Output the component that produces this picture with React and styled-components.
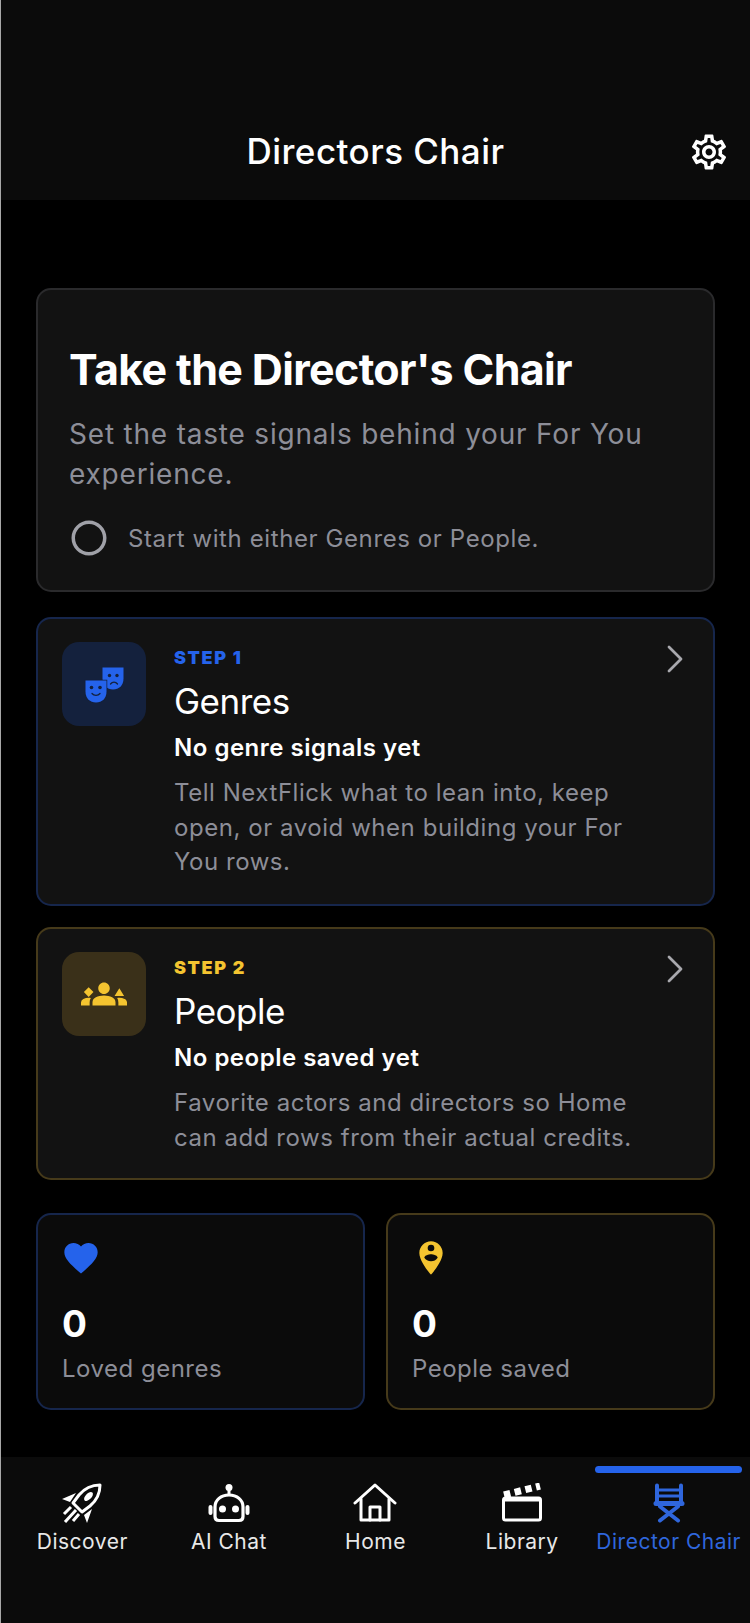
import styled, { createGlobalStyle } from "styled-components";
import { ChevronRight } from "lucide-react";
import {
  MdOutlineSettings,
  MdRadioButtonUnchecked,
  MdGroups3,
  MdFavorite,
  MdPersonPinCircle,
} from "react-icons/md";

const GlobalStyle = createGlobalStyle`
  html, body { margin: 0; padding: 0; background: #000; }
  * { box-sizing: border-box; }
  body { font-family: Inter, "Liberation Sans", sans-serif; color: #fff; }
`;

const Page = styled.div`
  width: 750px;
  height: 1623px;
  background: #000;
  border-left: 1px solid #a8a8a8;
  display: flex;
  flex-direction: column;
  overflow: hidden;
`;

const Header = styled.header`
  height: 200px;
  background: #0b0b0b;
  display: flex;
  align-items: flex-end;
  justify-content: center;
  padding-bottom: 26px;
  position: relative;
`;

const Title = styled.h1`
  margin: 0;
  font-size: 35px;
  line-height: 46px;
  font-weight: 500;
  letter-spacing: 0.45px;
`;

const SettingsBtn = styled.div`
  position: absolute;
  right: 20px;
  top: 131px;
  display: flex;
  font-size: 42px;
`;

const Main = styled.main`
  flex: 1;
  padding: 88px 35px 0 35px;
  display: flex;
  flex-direction: column;
  gap: 21px;
`;

const Card = styled.section`
  background: #121212;
  border: 2px solid ${(p) => p.$border};
  border-radius: 15px;
`;

const HeroCard = styled(Card)`
  height: 304px;
  padding: 52px 32px 0 31px;
  margin-bottom: 4px;
`;

const HeroTitle = styled.h2`
  margin: 0;
  font-size: 43px;
  line-height: 54px;
  font-weight: 700;
  letter-spacing: -0.65px;
`;

const HeroText = styled.p`
  margin: 18px 0 0;
  font-size: 28px;
  line-height: 40px;
  letter-spacing: 0.8px;
  color: #8d8e98;
`;

const HintRow = styled.div`
  display: flex;
  align-items: center;
  gap: 18px;
  margin-top: 23px;
  font-size: 24px;
  letter-spacing: 0.6px;
  color: #8d8e98;
  svg {
    font-size: 42px;
    color: #a0a1a8;
    margin-left: -1px;
  }
`;

const StepCard = styled(Card)`
  display: flex;
  gap: 28px;
  padding: 23px 24px 0 24px;
  height: ${(p) => p.$height}px;
`;

const IconBox = styled.div`
  width: 84px;
  height: 84px;
  flex: none;
  border-radius: 17px;
  background: ${(p) => p.$bg};
  color: ${(p) => p.$color};
  display: flex;
  align-items: center;
  justify-content: center;
`;

const StepBody = styled.div`
  flex: 1;
  min-width: 0;
`;

const StepHead = styled.div`
  display: flex;
  justify-content: space-between;
  align-items: center;
  height: 30px;
  svg {
    color: #a8a8ad;
    margin: 3px -10px 0 0;
  }
`;

const StepLabel = styled.span`
  font-size: 18px;
  font-weight: 900;
  letter-spacing: 1.6px;
  color: ${(p) => p.$color};
`;

const StepName = styled.h3`
  margin: 7px 0 0;
  font-size: 35px;
  line-height: 44px;
  font-weight: 400;
  letter-spacing: -0.5px;
`;

const StepStatus = styled.div`
  margin-top: 9px;
  font-size: 24px;
  line-height: 32px;
  font-weight: 600;
  letter-spacing: 0.5px;
`;

const StepText = styled.p`
  margin: 12px 0 0;
  max-width: 470px;
  font-size: 24px;
  line-height: 34.5px;
  letter-spacing: 0.55px;
  color: #8d8e98;
`;

const StatsRow = styled.div`
  display: grid;
  grid-template-columns: 1fr 1fr;
  gap: 21px;
  margin-top: 12px;
`;

const StatCard = styled.div`
  height: 197px;
  background: #0b0b0b;
  border: 2px solid ${(p) => p.$border};
  border-radius: 15px;
  padding: 23px 24px 0;
  svg {
    display: block;
    font-size: 40px;
    color: ${(p) => p.$color};
    margin-left: ${(p) => p.$iconShift}px;
  }
`;

const StatValue = styled.div`
  margin-top: 23px;
  font-size: 37px;
  line-height: 46px;
  font-weight: 700;
`;

const StatLabel = styled.div`
  margin-top: 6px;
  font-size: 24px;
  line-height: 32px;
  letter-spacing: 0.5px;
  color: #8d8e98;
`;

const Nav = styled.nav`
  height: 166px;
  background: #0b0b0b;
  padding: 0 8px;
  display: grid;
  grid-template-columns: repeat(5, 1fr);
`;

const NavItem = styled.div`
  position: relative;
  display: flex;
  flex-direction: column;
  align-items: center;
  padding-top: 26px;
  color: ${(p) => (p.$active ? "#2f66dc" : "#fff")};
  svg {
    display: block;
    height: 40px;
  }
`;

const NavBar = styled.div`
  position: absolute;
  top: 9px;
  left: 0;
  right: 0;
  height: 7px;
  border-radius: 4px;
  background: #2563eb;
`;

const NavLabel = styled.span`
  margin-top: 5px;
  font-size: 21px;
  line-height: 28px;
  letter-spacing: 0.5px;
  white-space: nowrap;
  color: ${(p) => (p.$active ? "#2f66dc" : "#e8e8e8")};
`;

function MasksIcon() {
  return (
    <svg width="40" height="40" viewBox="0 0 40 40">
      <path
        fill="currentColor"
        d="M18.500 3.500h21v11c0 7-4.500 11-10.500 11s-10.500-4-10.500-11z"
      />
      <path
        fill="currentColor"
        stroke="#14213d"
        strokeWidth="1.500"
        paintOrder="stroke"
        d="M1.500 16.500h21v11c0 7-4.500 11-10.500 11S1.500 34.500 1.500 27.500z"
      />
      <g fill="#14213d">
        <circle cx="25.500" cy="11.500" r="1.700" />
        <circle cx="33" cy="11.500" r="1.700" />
        <circle cx="7.500" cy="23.500" r="1.800" />
        <circle cx="16" cy="23.500" r="1.800" />
      </g>
      <g fill="none" stroke="#14213d" strokeWidth="1.300" strokeLinecap="round">
        <path d="M26.500 20c2-2.500 5-2.500 7 0" />
        <path d="M8 29.500c2 2.500 6 2.500 8 0" />
      </g>
    </svg>
  );
}

function RocketIcon() {
  return (
    <svg viewBox="0 0 40 40" fill="none" stroke="currentColor">
      <path strokeWidth="3" strokeLinejoin="round" d="M38 2C30 2 22 6 17 12l-6 8 9 9 8-6c6-5 10-13 10-21z" />
      <ellipse cx="26.500" cy="13.500" rx="3" ry="5.500" transform="rotate(45 26.500 13.500)" fill="currentColor" stroke="none" />
      <path fill="currentColor" stroke="none" d="M14 10L0 16l8 3zM30 26l-5 14-3-8z" />
      <path strokeWidth="3" d="M9 24l-7 7M14 27L3 39M17 31l-6 7" />
    </svg>
  );
}

function RobotIcon() {
  return (
    <svg viewBox="0 0 42 40" fill="none" stroke="currentColor">
      <circle cx="21" cy="4.500" r="3.500" fill="currentColor" stroke="none" />
      <path strokeWidth="3" d="M21 7v5" />
      <path strokeWidth="3.200" d="M11 37.500c-2.500 0-4-1.500-4-4V24c0-7 6-12 14-12s14 5 14 12v9.500c0 2.500-1.500 4-4 4z" />
      <path strokeWidth="4" strokeLinecap="round" d="M2.500 24v6M39.500 24v6" />
      <circle cx="14.500" cy="26" r="3.500" fill="currentColor" stroke="none" />
      <circle cx="27.500" cy="26" r="3.500" fill="currentColor" stroke="none" />
    </svg>
  );
}

function HomeIcon() {
  return (
    <svg viewBox="0 0 44 40" fill="none" stroke="currentColor" strokeWidth="3" strokeLinejoin="round" strokeLinecap="round">
      <path d="M2 20L22 2l20 18" />
      <path d="M8 16v21h28V16" />
      <path d="M17 37V24h10v13" />
    </svg>
  );
}

function ClapperIcon() {
  return (
    <svg viewBox="0 0 40 40" fill="none" stroke="currentColor">
      <rect x="1.500" y="15" width="37" height="22" rx="2" strokeWidth="3" />
      <path d="M1 17h38" strokeWidth="3" />
      <path d="M2 12L38 3" strokeWidth="7" strokeDasharray="6.500 4.500" />
    </svg>
  );
}

function ChairIcon() {
  return (
    <svg viewBox="0 0 32 40" fill="none" stroke="currentColor" strokeLinecap="round">
      <path strokeWidth="4" d="M4 2.500v18M28 2.500v18" />
      <path strokeWidth="3" strokeLinecap="butt" d="M4 7h24M4 13h24" />
      <path strokeWidth="5" d="M3 20.500h26" />
      <path strokeWidth="4" d="M7 23.500l18 14M25 23.500L7 37.500" />
    </svg>
  );
}

function App() {
  return (
    <Page>
      <GlobalStyle />
      <Header>
        <Title>Directors Chair</Title>
        <SettingsBtn>
          <MdOutlineSettings />
        </SettingsBtn>
      </Header>
      <Main>
        <HeroCard $border="#2a2a2c">
          <HeroTitle>Take the Director's Chair</HeroTitle>
          <HeroText>Set the taste signals behind your For You experience.</HeroText>
          <HintRow>
            <MdRadioButtonUnchecked />
            Start with either Genres or People.
          </HintRow>
        </HeroCard>

        <StepCard $border="#16264c" $height={289}>
          <IconBox $bg="#14213d" $color="#2563eb">
            <MasksIcon />
          </IconBox>
          <StepBody>
            <StepHead>
              <StepLabel $color="#2563eb">STEP 1</StepLabel>
              <ChevronRight size={48} strokeWidth={1.4} />
            </StepHead>
            <StepName>Genres</StepName>
            <StepStatus>No genre signals yet</StepStatus>
            <StepText>
              Tell NextFlick what to lean into, keep open, or avoid when building your For You rows.
            </StepText>
          </StepBody>
        </StepCard>

        <StepCard $border="#463a1a" $height={253}>
          <IconBox $bg="#3a3019" $color="#f4c430">
            <MdGroups3 size={46} />
          </IconBox>
          <StepBody>
            <StepHead>
              <StepLabel $color="#f4c430">STEP 2</StepLabel>
              <ChevronRight size={48} strokeWidth={1.4} />
            </StepHead>
            <StepName>People</StepName>
            <StepStatus>No people saved yet</StepStatus>
            <StepText>
              Favorite actors and directors so Home can add rows from their actual credits.
            </StepText>
          </StepBody>
        </StepCard>

        <StatsRow>
          <StatCard $border="#16264c" $color="#2563eb" $iconShift={-1}>
            <MdFavorite />
            <StatValue>0</StatValue>
            <StatLabel>Loved genres</StatLabel>
          </StatCard>
          <StatCard $border="#463a1a" $color="#f4c430" $iconShift={-1}>
            <MdPersonPinCircle />
            <StatValue>0</StatValue>
            <StatLabel>People saved</StatLabel>
          </StatCard>
        </StatsRow>
      </Main>
      <Nav>
        <NavItem>
          <RocketIcon />
          <NavLabel>Discover</NavLabel>
        </NavItem>
        <NavItem>
          <RobotIcon />
          <NavLabel>AI Chat</NavLabel>
        </NavItem>
        <NavItem>
          <HomeIcon />
          <NavLabel>Home</NavLabel>
        </NavItem>
        <NavItem>
          <ClapperIcon />
          <NavLabel>Library</NavLabel>
        </NavItem>
        <NavItem $active>
          <NavBar />
          <ChairIcon />
          <NavLabel $active>Director Chair</NavLabel>
        </NavItem>
      </Nav>
    </Page>
  );
}

export default App;
